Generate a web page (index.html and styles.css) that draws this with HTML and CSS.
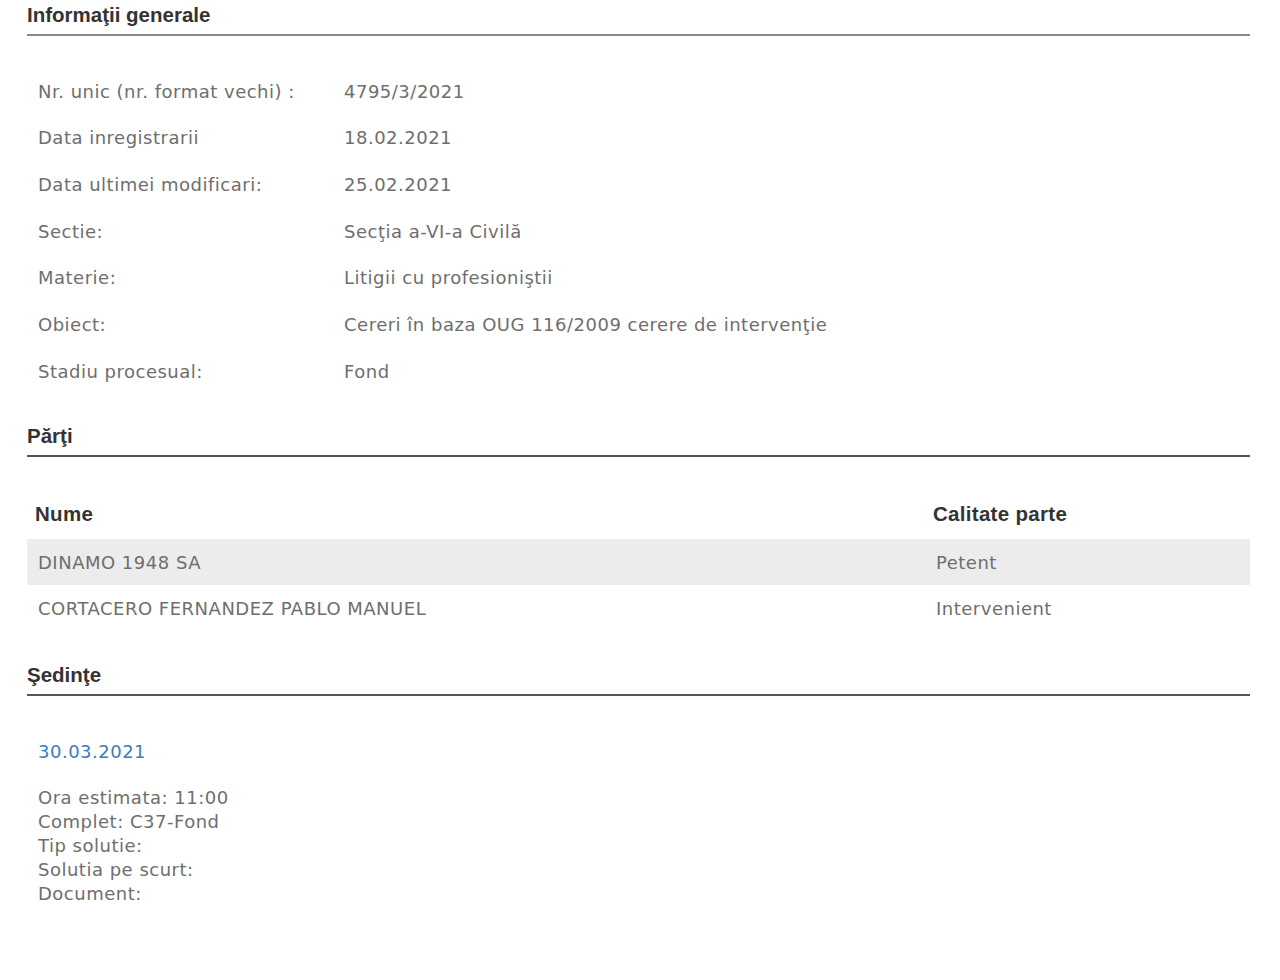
FILE: index.html
```html
<!DOCTYPE html>
<html lang="ro">
<head>
  <meta charset="UTF-8" />
  <meta name="viewport" content="width=device-width, initial-scale=1.0"/>
  <title>Dosar 4795/3/2021</title>
  <link rel="stylesheet" href="styles.css">
</head>
<body>

  <div class="page">

    <h2 class="section-title first">Informaţii generale</h2>
    <table class="info">
      <tr><td class="label">Nr. unic (nr. format vechi) :</td><td>4795/3/2021</td></tr>
      <tr><td class="label">Data inregistrarii</td><td>18.02.2021</td></tr>
      <tr><td class="label">Data ultimei modificari:</td><td>25.02.2021</td></tr>
      <tr><td class="label">Sectie:</td><td>Secţia a-VI-a Civilă</td></tr>
      <tr><td class="label">Materie:</td><td>Litigii cu profesioniştii</td></tr>
      <tr><td class="label">Obiect:</td><td>Cereri în baza OUG 116/2009 cerere de intervenţie</td></tr>
      <tr><td class="label">Stadiu procesual:</td><td>Fond</td></tr>
    </table>

    <h2 class="section-title">Părţi</h2>
    <table class="parti">
      <thead>
        <tr><th class="col-name">Nume</th><th>Calitate parte</th></tr>
      </thead>
      <tbody>
        <tr class="odd"><td>DINAMO 1948 SA</td><td>Petent</td></tr>
        <tr><td>CORTACERO FERNANDEZ PABLO MANUEL</td><td>Intervenient</td></tr>
      </tbody>
    </table>

    <h2 class="section-title">Şedinţe</h2>
    <div class="sedinta">
      <a href="#" class="sedinta-date">30.03.2021</a>
      <div class="sedinta-details">
        Ora estimata: 11:00<br>
        Complet: C37-Fond<br>
        Tip solutie:<br>
        Solutia pe scurt:<br>
        Document:
      </div>
    </div>

  </div>

</body>
</html>
```

FILE: styles.css
```css
body {
  margin: 0;
  padding: 0;
  background: #fff;
  font-family: 'DejaVu Sans', Verdana, sans-serif;
  font-size: 18px;
  letter-spacing: 0.5px;
  color: #6e6e6e;
}
.page {
  width: 1223px;
  margin-left: 27px;
}
.section-title {
  margin: 0;
  font-family: 'Liberation Sans', Arial, sans-serif;
  font-size: 20.5px;
  font-weight: bold;
  letter-spacing: 0;
  color: #333;
  line-height: 30px;
  padding-bottom: 4px;
  border-bottom: 2px solid #555;
}
.section-title.first {
  border-bottom-color: #888;
}
table {
  border-collapse: collapse;
  width: 100%;
}
td {
  padding: 0 0 0 11px;
  vertical-align: middle;
}

/* general info */
.info {
  margin-top: 32px;
  margin-bottom: 26px;
}
.info tr {
  height: 46.67px;
}
.info .label {
  width: 295px;
}

/* parties */
.parti {
  margin-top: 32px;
  margin-bottom: 29px;
}
.parti th {
  font-family: 'Liberation Sans', Arial, sans-serif;
  font-size: 20.5px;
  letter-spacing: 0.3px;
  color: #333;
  text-align: left;
  padding: 0 0 0 8px;
  height: 50px;
}
.parti .col-name {
  width: 890px;
}
.parti td {
  height: 44px;
  padding-top: 2px;
}
.parti tr.odd td {
  background: #ececec;
}

/* hearings */
.sedinta {
  padding: 44px 0 0 11px;
}
.sedinta-date {
  display: block;
  color: #3b7dbf;
  text-decoration: none;
  line-height: 24px;
  margin-bottom: 22px;
}
.sedinta-details {
  line-height: 24px;
}
```
